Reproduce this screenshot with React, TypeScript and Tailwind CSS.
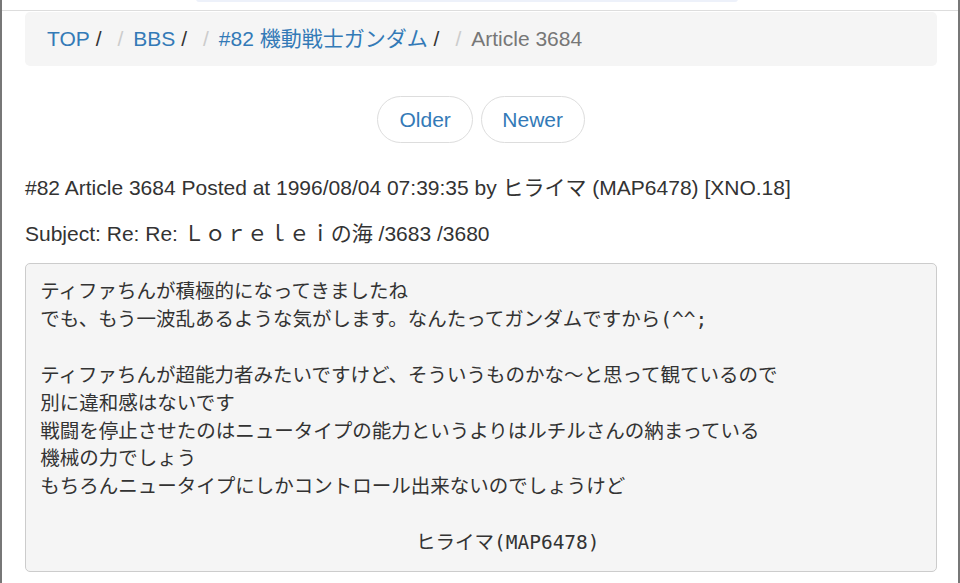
import React from "react";

const sans = { fontFamily: '"Liberation Sans", "Noto Sans CJK JP", Arial, sans-serif' };

function Crumb({ label, last }: { label: string; last?: boolean }) {
  return (
    <span className="inline-flex items-center">
      <a className="text-[#337ab7]">{label}</a>
      <span className="text-[#333]">&nbsp;/</span>
      {!last && <span className="text-[#ccc] ml-[16px] mr-[10px]">/</span>}
    </span>
  );
}

export default function App() {
  const lines = [
    "ティファちんが積極的になってきましたね",
    "でも、もう一波乱あるような気がします。なんたってガンダムですから(^^;",
    "",
    "ティファちんが超能力者みたいですけど、そういうものかな〜と思って観ているので",
    "別に違和感はないです",
    "戦闘を停止させたのはニュータイプの能力というよりはルチルさんの納まっている",
    "機械の力でしょう",
    "もちろんニュータイプにしかコントロール出来ないのでしょうけど",
    "",
    "                                ヒライマ(MAP6478)",
  ];
  return (
    <div className="w-[960px] h-[583px] overflow-hidden bg-white text-[#333] text-[21px] leading-[30px]" style={sans}>
      <div className="h-full border-x-2 border-[#777] flex flex-col">
        <div className="h-[11px] border-b border-[#ddd] flex justify-center">
          <div className="w-[542px] h-[3px] -mt-[1px] mr-[26px] bg-[#edf1fa] rounded-b-[6px]" />
        </div>
        <div className="pl-[23px] pr-[21px] flex flex-col">
          <div className="mt-[1px] h-[54px] bg-[#f5f5f5] rounded-[5px] pl-[22px] flex items-center">
            <Crumb label="TOP" />
            <Crumb label="BBS" />
            <Crumb label="#82 機動戦士ガンダム" />
            <span className="text-[#777]">Article 3684</span>
          </div>
          <div className="mt-[30px] flex justify-center gap-[8px]">
            <a className="px-[21px] py-[7.5px] border border-[#ddd] rounded-full text-[#337ab7] bg-white">Older</a>
            <a className="px-[20.5px] py-[7.5px] border border-[#ddd] rounded-full text-[#337ab7] bg-white">Newer</a>
          </div>
          <p className="mt-[30px]">#82 Article 3684 Posted at 1996/08/04 07:39:35 by ヒライマ (MAP6478) [XNO.18]</p>
          <p className="mt-[16px]">Subject: Re: Re: Ｌｏｒｅｌｅｉの海 /3683 /3680</p>
          <pre
            className="mt-[14px] bg-[#f5f5f5] border border-[#ccc] rounded-[5px] px-[14.25px] py-[14.25px] text-[19.5px] leading-[27.86px] text-[#333] whitespace-pre"
            style={{ fontFamily: '"DejaVu Sans Mono", "Noto Sans CJK JP", monospace' }}
          >
            {lines.join("\n")}
          </pre>
        </div>
      </div>
    </div>
  );
}
